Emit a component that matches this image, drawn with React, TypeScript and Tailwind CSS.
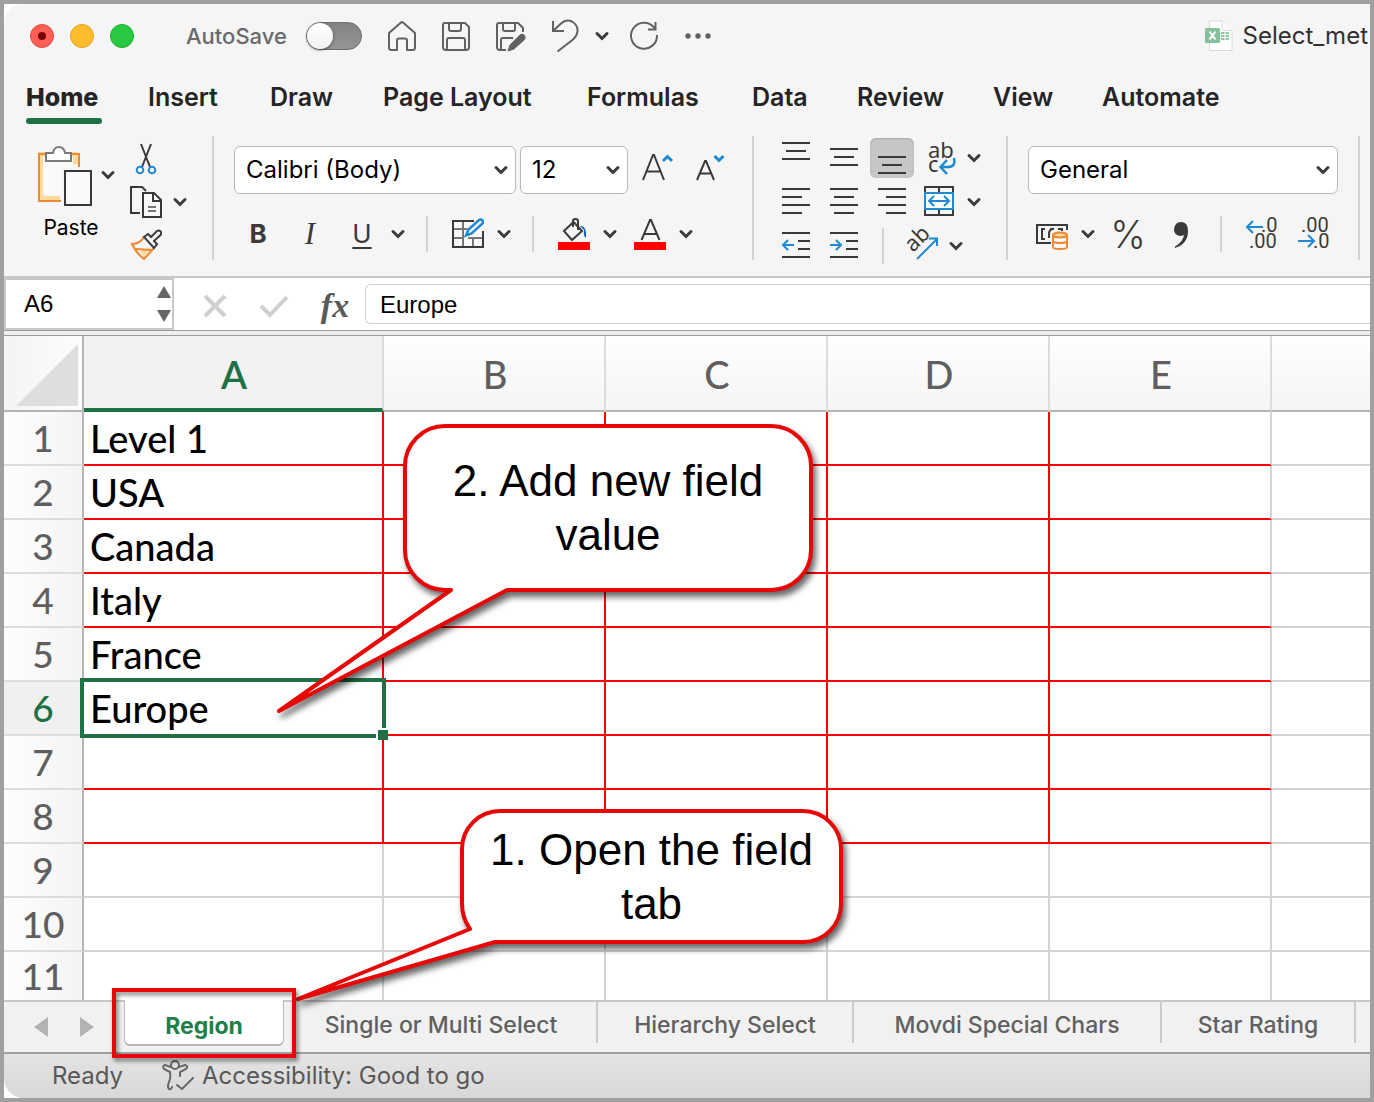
import React from 'react';

const ribbonTabs = [
  { label: 'Home', width: 'w-[76px]' },
  { label: 'Insert', width: 'w-[74px]' },
  { label: 'Draw', width: 'w-[65px]' },
  { label: 'Page Layout', width: 'w-[156px]' },
  { label: 'Formulas', width: 'w-[117px]' },
  { label: 'Data', width: 'w-[57px]' },
  { label: 'Review', width: 'w-[88px]' },
  { label: 'View', width: 'w-[61px]' },
  { label: 'Automate', width: 'w-[122px]' },
];

const columns = ['A', 'B', 'C', 'D', 'E', ''];
const values = ['Level 1', 'USA', 'Canada', 'Italy', 'France', 'Europe', '', '', '', '', ''];
const sheets = [
  { name: 'Single or Multi Select', width: 'w-[312px]' },
  { name: 'Hierarchy Select', width: 'w-[256px]' },
  { name: 'Movdi Special Chars', width: 'w-[308px]' },
  { name: 'Star Rating', width: 'w-[194px]' },
];

const SELECTED_ROW = 6;
const BORDERED_ROWS = 8;

const Chevron: React.FC = () => (
  <svg className="h-6 w-6" viewBox="0 0 24 24" fill="none" stroke="#3b3a39" strokeWidth={3}>
    <path d="M7 9.5l5 5 5-5" strokeLinecap="round" strokeLinejoin="miter" />
  </svg>
);

const MenuButton: React.FC<{ label: string }> = ({ label }) => (
  <button aria-label={label} className="flex h-8 w-6 shrink-0 items-center justify-center">
    <Chevron />
  </button>
);

interface IconButtonProps {
  label: string;
  className?: string;
  children: React.ReactNode;
}

const IconButton: React.FC<IconButtonProps> = ({ label, className = 'w-8 h-8', children }) => (
  <button aria-label={label} className={`flex shrink-0 items-center justify-center ${className}`}>
    {children}
  </button>
);

// Horizontal strokes of the alignment icons, given as [x1, x2, y]
const Lines: React.FC<{ lines: number[][]; children?: React.ReactNode }> = ({ lines, children }) => (
  <svg className="h-8 w-8" viewBox="0 0 32 32" fill="none" strokeWidth={2}>
    {lines.map(([x1, x2, y]) => (
      <path key={y} d={`M${x1} ${y}H${x2}`} stroke="#3b3a39" />
    ))}
    {children}
  </svg>
);

const Divider: React.FC = () => <div className="h-31 w-0.5 shrink-0 bg-[#d2d2d2]" />;
const SmallDivider: React.FC = () => <div className="h-9 w-0.5 shrink-0 bg-[#d2d2d2]" />;

const Picker: React.FC<{ label: string; value: string; width: string }> = ({ label, value, width }) => (
  <div className={`relative shrink-0 ${width}`}>
    <select
      aria-label={label}
      defaultValue={value}
      className="h-12 w-full appearance-none rounded-md border border-[#b8b8b8] bg-white pl-[11px] text-[24px] text-black"
    >
      <option>{value}</option>
    </select>
    <span className="pointer-events-none absolute top-3 right-[3px]">
      <Chevron />
    </span>
  </div>
);

const TitleBar: React.FC = () => (
  <header className="flex h-16 items-center overflow-hidden pl-[26px]">
    <div className="flex shrink-0 gap-4">
      <button aria-label="Close" className="flex h-6 w-6 items-center justify-center rounded-full border border-[#e24b41] bg-[#ff5f57]">
        <span className="h-2 w-2 rounded-full bg-[#7a0000]" />
      </button>
      <button aria-label="Minimize" className="h-6 w-6 rounded-full border border-[#e1a325] bg-[#febc2e]" />
      <button aria-label="Zoom" className="h-6 w-6 rounded-full border border-[#1dad2b] bg-[#28c840]" />
    </div>
    <label className="ml-[52px] flex shrink-0 items-center text-[22px] font-medium text-[#6a6a6a]">
      <span className="w-[120px]">AutoSave</span>
      <input type="checkbox" className="peer sr-only" />
      <span className="flex h-7 w-14 items-center rounded-full border border-[#6f6f6f] bg-linear-to-b from-[#828282] to-[#959595]">
        <span className="h-[26px] w-[26px] rounded-full bg-linear-to-b from-white to-[#f2f2f2] shadow-[0_1px_3px_rgba(0,0,0,0.5)]" />
      </span>
    </label>
    <div className="ml-6 flex shrink-0 items-center text-[#616161]">
      <IconButton label="Home" className="mr-[22px] h-8 w-8">
        <svg className="h-8 w-8" viewBox="0 0 32 32" fill="none" stroke="currentColor" strokeWidth={2} strokeLinejoin="round">
          <path d="M3 13L15 2.500Q16 1.700 17 2.500L29 13V27.500Q29 30 26.500 30H21V20.500Q21 18.500 19 18.500H13Q11 18.500 11 20.500V30H5.500Q3 30 3 27.500Z" />
        </svg>
      </IconButton>
      <IconButton label="Save" className="mr-[22px] h-8 w-8">
        <svg className="h-8 w-8" viewBox="0 0 32 32" fill="none" stroke="currentColor" strokeWidth={2} strokeLinejoin="round">
          <path d="M5 3H25L29 7V27Q29 30 26 30H6Q3 30 3 27V5Q3 3 5 3Z" />
          <path d="M9 3V9Q9 11 11 11H19Q21 11 21 9V3M7 30V20Q7 18 9 18H23Q25 18 25 20V30" />
        </svg>
      </IconButton>
      <IconButton label="Save As" className="mr-6 h-8 w-8">
        <svg className="h-8 w-8" viewBox="0 0 32 32" fill="none" stroke="currentColor" strokeWidth={2} strokeLinejoin="round">
          <path d="M12 30H6Q3 30 3 27V5Q3 3 5 3H24L29 8V12M9 3V9Q9 11 11 11H19Q21 11 21 9V3M7 30V20Q7 18 9 18H19" />
          <path d="M14 31L16 25L26 15Q28.500 13 30.500 15.500Q32 18 30 20L20 29Z" fill="currentColor" strokeWidth={1} />
        </svg>
      </IconButton>
      <IconButton label="Undo" className="mr-2 h-9 w-8">
        <svg className="h-9 w-8" viewBox="0 0 32 36" fill="none" stroke="currentColor" strokeWidth={2}>
          <path d="M3 3V13H14M3 13L11 5.500Q16 1 22 3.500Q28 7 27.500 13.500Q27 18 23 21.500L7.500 33.500" />
        </svg>
      </IconButton>
      <MenuButton label="Undo options" />
      <IconButton label="Redo" className="ml-3.5 h-8 w-8">
        <svg className="h-8 w-8" viewBox="0 0 32 32" fill="none" stroke="currentColor" strokeWidth={2}>
          <path d="M26.500 8A13 13 0 1 0 29 15M27.500 2V9.500H20" />
        </svg>
      </IconButton>
      <IconButton label="More" className="ml-6 h-8 w-8">
        <svg className="h-8 w-8" viewBox="0 0 32 32" fill="currentColor">
          <circle cx="4" cy="16" r="2.700" />
          <circle cx="14" cy="16" r="2.700" />
          <circle cx="24" cy="16" r="2.700" />
        </svg>
      </IconButton>
    </div>
    <h1 className="ml-auto flex shrink-0 items-center pr-0.5 text-[24px] text-[#303030]">
      <svg className="mr-2.5 h-8 w-7" viewBox="0 0 28 32">
        <path d="M4.500 1H17L27 11V30.500H4.500Z" fill="#fff" stroke="#d9d9d9" />
        <path d="M17 1V9Q17 10.500 19 10.500H27" fill="#fafafa" stroke="#d9d9d9" />
        <path d="M16 12H24V20H16Z" fill="#8cc8a2" />
        <path d="M16 14.500H24M16 17.500H24M20 12V20" stroke="#fff" />
        <rect y="8" width="15" height="15" rx="1" fill="#86bf9c" />
        <path d="M4.500 11.500L10.500 19.500M10.500 11.500L4.500 19.500" stroke="#fff" strokeWidth={2} />
      </svg>
      Select_met
    </h1>
  </header>
);

const RibbonTabs: React.FC = () => (
  <nav className="flex h-14 overflow-hidden pl-[22px] text-[25px] text-[#242424]">
    {ribbonTabs.map(({ label, width }, i) => (
      <button
        key={label}
        className={`flex h-14 shrink-0 flex-col justify-between pt-3 text-left whitespace-nowrap ${width} ${i === 0 ? 'mr-[46px] font-extrabold' : 'mr-12 font-semibold'}`}
      >
        <span className="leading-[34px]">{label}</span>
        {i === 0 && <span className="h-1.5 w-full rounded-full bg-[#1e7145]" />}
      </button>
    ))}
  </nav>
);

const ClipboardGroup: React.FC = () => (
  <div className="flex w-[182px] shrink-0 pt-1">
    <div className="w-[100px] pt-1 pl-1.5">
      <div className="flex items-center">
        <IconButton label="Paste" className="h-[62px] w-14">
          <svg className="h-[62px] w-14" viewBox="0 0 56 62" fill="none" strokeWidth={2}>
            <path d="M2 8H42V20H36V14H8V52H24V58H2Z" fill="#f9db9b" />
            <path d="M7 13H37V51H7Z" fill="#fafafa" />
            <path d="M25 57H3V10H43V24" stroke="#ef8733" />
            <path d="M10 9H17Q18 3 23 3Q28 3 29 9H35V17H10Z" fill="#fff" stroke="#7a7a7a" />
            <path d="M26 23H57V64H26Z" fill="#f5f5f5" />
            <path d="M29 27H55V61H29Z" fill="#fafafa" stroke="#3b3a39" />
          </svg>
        </IconButton>
        <div className="ml-1">
          <MenuButton label="Paste options" />
        </div>
      </div>
      <div className="w-[70px] pt-1.5 text-center text-[21px] leading-8 text-black">Paste</div>
    </div>
    <div>
      <IconButton label="Cut" className="h-9 w-8">
        <svg className="h-9 w-8" viewBox="0 0 32 36" fill="none" strokeWidth={2}>
          <path d="M11 4L20 27M21 4L12 27" stroke="#3b3a39" />
          <circle cx="10" cy="30" r="3.300" stroke="#1f8ad2" />
          <circle cx="22" cy="30" r="3.300" stroke="#1f8ad2" />
        </svg>
      </IconButton>
      <div className="mt-2 flex items-center gap-1.5">
        <IconButton label="Copy" className="h-9 w-8">
          <svg className="h-9 w-8" viewBox="0 0 32 36" fill="none" stroke="#3b3a39" strokeWidth={2}>
            <path d="M10 29H1V3H12L16 7" />
            <path d="M13 9H24L31 16V33H13Z" fill="#fafafa" />
            <path d="M23 9V17H31" />
            <path d="M18 23H26M18 27H26" stroke="#777" />
          </svg>
        </IconButton>
        <MenuButton label="Copy options" />
      </div>
      <IconButton label="Format Painter" className="mt-2 h-8 w-8">
        <svg className="h-8 w-8" viewBox="0 0 32 32" fill="none" strokeWidth={2}>
          <path d="M10 23L22 19L14 29Z" fill="#f9db9b" />
          <path d="M14 9Q10 16 2 16Q6 25 14 31L24 20M6 21L21 22" stroke="#ef8733" />
          <path d="M14 9L18 6L21 9L27 3Q29 2 30.500 3.500Q32 5 30.500 7L24 13L27 16L24 20Z" fill="#fafafa" stroke="#3b3a39" />
        </svg>
      </IconButton>
    </div>
  </div>
);

const FontGroup: React.FC = () => (
  <div className="w-[500px] shrink-0 pt-2.5 text-[#3b3a39]">
    <div className="flex gap-1">
      <Picker label="Font" value="Calibri (Body)" width="w-[282px]" />
      <Picker label="Font size" value="12" width="w-[108px]" />
      <IconButton label="Increase font size" className="ml-1.5 h-11 w-10">
        <svg className="h-9 w-9" viewBox="0 0 36 36" fill="none" stroke="#3b3a39" strokeWidth={2}>
          <path d="M3 30L13 5H14L24 30M6.500 21.500H20.500" />
          <path d="M23 11L27.500 6.500L32 11" stroke="#1f8ad2" strokeWidth={3} />
        </svg>
      </IconButton>
      <IconButton label="Decrease font size" className="ml-2 h-11 w-10">
        <svg className="h-9 w-9" viewBox="0 0 36 36" fill="none" stroke="#3b3a39" strokeWidth={2}>
          <path d="M5 30L13 11H14L22 30M7.500 23.500H19.500" />
          <path d="M22.500 6L27 10.500L31.500 6" stroke="#1f8ad2" strokeWidth={3} />
        </svg>
      </IconButton>
    </div>
    <div className="mt-[22px] flex items-center text-[26px] leading-9">
      <button className="w-12 font-bold">B</button>
      <button className="w-14 font-['Liberation_Serif',serif] text-[31px] italic">I</button>
      <button className="w-12 underline decoration-2 underline-offset-4">U</button>
      <MenuButton label="Underline options" />
      <div className="mr-6 ml-4">
        <SmallDivider />
      </div>
      <IconButton label="Borders">
        <svg className="h-8 w-8" viewBox="0 0 32 32" fill="none" strokeWidth={2}>
          <path d="M1 2H31V30H1Z" fill="#fafafa" />
          <path d="M11 3V29M1 11H16M1 20H12M21 20V29M16 20H31" stroke="#777" />
          <path d="M22 3H1V29H31V13" stroke="#3b3a39" />
          <path d="M12 19L15 11L27 0H33V6L21 17Z" fill="#f5f5f5" />
          <path d="M14 17.500L16.500 11.500L27 2Q29 1 30.500 2.500Q31.500 4 30 6L19.500 15.500Z" fill="#fafafa" stroke="#1f8ad2" strokeWidth={2.500} />
        </svg>
      </IconButton>
      <div className="ml-2">
        <MenuButton label="Border options" />
      </div>
      <div className="mr-6 ml-4">
        <SmallDivider />
      </div>
      <IconButton label="Fill color">
        <svg className="h-8 w-8" viewBox="0 0 32 32" fill="none" strokeWidth={2}>
          <path d="M6 13L15.500 4L24 13L14 22Z" fill="#fafafa" stroke="#3b3a39" />
          <path d="M15 9V3Q15 1 17.500 1Q20 1 20 3V12" stroke="#3b3a39" />
          <path d="M22 8Q29 7 28 20Q25 18 26 12Z" fill="#0f62b0" />
          <path d="M0 24H32V32H0Z" fill="#f00" />
        </svg>
      </IconButton>
      <div className="mr-3 ml-2">
        <MenuButton label="Fill color options" />
      </div>
      <IconButton label="Font color">
        <svg className="h-8 w-8" viewBox="0 0 32 32" fill="none" stroke="#3b3a39" strokeWidth={2}>
          <path d="M7.500 22L16 2H17L25.500 22M10.500 16H22.500" />
          <path d="M0 24H32V32H0Z" fill="#f00" stroke="none" />
        </svg>
      </IconButton>
      <div className="ml-2">
        <MenuButton label="Font color options" />
      </div>
    </div>
  </div>
);

const AlignmentGroup: React.FC = () => (
  <div className="w-[234px] shrink-0 pt-0.5">
    <div className="flex h-10 items-center">
      <IconButton label="Top align" className="h-10 w-12">
        <Lines lines={[[2, 30, 1], [6, 26, 9], [2, 30, 17]]} />
      </IconButton>
      <IconButton label="Middle align" className="h-10 w-12">
        <Lines lines={[[2, 30, 7], [6, 26, 15], [2, 30, 23]]} />
      </IconButton>
      <IconButton label="Bottom align" className="mx-0.5 h-10 w-11 rounded-md bg-[#c6c6c6] shadow-[inset_0_1px_2px_rgba(0,0,0,0.15)]">
        <Lines lines={[[2, 30, 15], [6, 26, 23], [2, 30, 31]]} />
      </IconButton>
      <IconButton label="Wrap text" className="mr-1 ml-1.5 h-8 w-9">
        <svg className="h-9 w-9 overflow-visible" viewBox="0 0 36 36" fill="none" strokeWidth={2.500}>
          <text x="6" y="18" fontSize="22" fill="#3b3a39" className="font-['Noto_Sans']">ab</text>
          <text x="6" y="32" fontSize="22" fill="#3b3a39" className="font-['Noto_Sans']">c</text>
          <path d="M32 18Q34 27 26 27H19M25 20L18.500 27L25 34" stroke="#1f8ad2" />
        </svg>
      </IconButton>
      <MenuButton label="Wrap options" />
    </div>
    <div className="mt-0.5 flex h-11 items-center">
      <IconButton label="Align left" className="h-10 w-12">
        <Lines lines={[[2, 30, 3], [2, 22, 11], [2, 30, 19], [2, 22, 27]]} />
      </IconButton>
      <IconButton label="Center" className="h-10 w-12">
        <Lines lines={[[2, 30, 3], [6, 26, 11], [2, 30, 19], [6, 26, 27]]} />
      </IconButton>
      <IconButton label="Align right" className="h-10 w-12">
        <Lines lines={[[2, 30, 3], [10, 30, 11], [2, 30, 19], [10, 30, 27]]} />
      </IconButton>
      <IconButton label="Merge" className="mr-1 ml-1.5 h-8 w-9">
        <svg className="h-8 w-8" viewBox="0 0 32 32" fill="none" strokeWidth={2}>
          <path d="M1 1H29V29H1ZM15 1V7M15 23V29" stroke="#3b3a39" />
          <path d="M1 7H29V23H1Z" fill="#fafafa" stroke="#1f8ad2" />
          <path d="M5 15H25M10 10L5 15L10 20M20 10L25 15L20 20" stroke="#1f8ad2" />
        </svg>
      </IconButton>
      <MenuButton label="Merge options" />
    </div>
    <div className="flex h-11 items-center">
      <IconButton label="Decrease indent" className="h-10 w-12">
        <Lines lines={[[2, 30, 3], [18, 30, 11], [18, 30, 19], [2, 30, 27]]}>
          <path d="M14 15H3M8 10L3 15L8 20" stroke="#1f8ad2" />
        </Lines>
      </IconButton>
      <IconButton label="Increase indent" className="h-10 w-12">
        <Lines lines={[[2, 30, 3], [18, 30, 11], [18, 30, 19], [2, 30, 27]]}>
          <path d="M2 15H13M8 10L13 15L8 20" stroke="#1f8ad2" />
        </Lines>
      </IconButton>
      <div className="ml-3.5">
        <SmallDivider />
      </div>
      <IconButton label="Orientation" className="ml-5 h-9 w-9">
        <svg className="h-9 w-9 overflow-visible" viewBox="0 0 36 36" fill="none" strokeWidth={2}>
          <text transform="translate(9 25) rotate(-45)" fontSize="22" fill="#3b3a39" className="font-['Noto_Sans']">ab</text>
          <path d="M13 31L33 11M25 10.500H33V18" stroke="#1f8ad2" />
        </svg>
      </IconButton>
      <div className="ml-1">
        <MenuButton label="Orientation options" />
      </div>
    </div>
  </div>
);

const NumberGroup: React.FC = () => (
  <div className="w-[330px] shrink-0 pt-2.5 text-[#3b3a39]">
    <Picker label="Number format" value="General" width="w-[310px]" />
    <div className="mt-[22px] flex items-center pl-2">
      <IconButton label="Currency">
        <svg className="h-8 w-8" viewBox="0 0 32 32" fill="none" strokeWidth={2}>
          <path d="M15 25H1V7H31V12" stroke="#3b3a39" />
          <path d="M9 11H6V21H9M18 11Q13 10 13 17V20M22 11H26V13" stroke="#3b3a39" />
          <path d="M17 17V29Q17 31 24 31Q31 31 31 29V17" fill="#fafafa" stroke="#ef8733" />
          <ellipse cx="24" cy="17" rx="7" ry="2.500" fill="#f9db9b" stroke="#ef8733" />
          <path d="M17 23Q18 25 24 25Q30 25 31 23" stroke="#ef8733" />
        </svg>
      </IconButton>
      <div className="ml-2">
        <MenuButton label="Currency options" />
      </div>
      <button aria-label="Percent style" className="ml-2 flex h-9 w-10 items-center justify-center text-[38px] leading-9 font-light">%</button>
      <IconButton label="Comma style" className="ml-5 h-8 w-7">
        <svg className="h-8 w-7" viewBox="0 0 28 32" fill="#3b3a39">
          <path d="M13 4Q20 4 20 13Q20 26 7 30V28.500Q15 24 16 17Q14 18 12 18Q6 17 6 11Q7 4 13 4Z" />
        </svg>
      </IconButton>
      <div className="mr-5 ml-6">
        <SmallDivider />
      </div>
      <IconButton label="Increase decimal" className="h-9 w-9">
        <svg className="h-9 w-9 overflow-visible" viewBox="0 0 36 36" fill="none" strokeWidth={2}>
          <text x="19" y="16" fontSize="20" fill="#3b3a39" className="font-['Roboto']">.0</text>
          <text x="7" y="32" fontSize="20" fill="#3b3a39" className="font-['Roboto']">.00</text>
          <path d="M21 11H5M11 5L5 11L11 17" stroke="#1f8ad2" />
        </svg>
      </IconButton>
      <IconButton label="Decrease decimal" className="ml-4 h-9 w-9">
        <svg className="h-9 w-9 overflow-visible" viewBox="0 0 36 36" fill="none" strokeWidth={2}>
          <text x="7" y="16" fontSize="20" fill="#3b3a39" className="font-['Roboto']">.00</text>
          <text x="19" y="32" fontSize="20" fill="#3b3a39" className="font-['Roboto']">.0</text>
          <path d="M4 25H20M14 19L20 25L14 31" stroke="#1f8ad2" />
        </svg>
      </IconButton>
    </div>
  </div>
);

const FormulaBar: React.FC = () => (
  <div className="flex h-[54px] items-center overflow-hidden border-t-2 border-[#c8c8c8] bg-white font-['Liberation_Sans',sans-serif] text-[24px] text-black">
    <div className="flex h-full w-[170px] shrink-0 items-center border-2 border-[#c8c8c8]">
      <input aria-label="Name box" defaultValue="A6" className="min-w-0 flex-1 bg-transparent pl-[18px]" />
      <div className="flex w-[15px] shrink-0 flex-col gap-3">
        <button aria-label="Previous name">
          <svg className="h-3 w-3.5" viewBox="0 0 14 12" fill="#666">
            <path d="M7 0L14 12H0Z" />
          </svg>
        </button>
        <button aria-label="Next name">
          <svg className="h-3 w-3.5" viewBox="0 0 14 12" fill="#666">
            <path d="M7 12L14 0H0Z" />
          </svg>
        </button>
      </div>
    </div>
    <IconButton label="Cancel" className="ml-[25px] h-8 w-8">
      <svg className="h-8 w-8" viewBox="0 0 32 32" stroke="#cfcfcf" strokeWidth={4}>
        <path d="M6 8L26 28M26 8L6 28" />
      </svg>
    </IconButton>
    <IconButton label="Enter" className="ml-[26px] h-8 w-8">
      <svg className="h-8 w-8" viewBox="0 0 32 32" fill="none" stroke="#cfcfcf" strokeWidth={4}>
        <path d="M4 18L13 27L30 9" />
      </svg>
    </IconButton>
    <button aria-label="Insert function" className="ml-7 w-9 pt-1 font-['Liberation_Serif',serif] text-[34px] leading-9 font-bold text-[#5a5a5a] italic">
      fx
    </button>
    <input
      aria-label="Formula"
      defaultValue="Europe"
      className="ml-3 h-10 min-w-0 flex-1 rounded-l-md border border-r-0 border-[#d0d0d0] pt-0.5 pl-3.5"
    />
  </div>
);

const cellBorder = (row: number, col: number) => {
  if (row > BORDERED_ROWS || col > 4) return 'border-[#d4d4d4]';
  return col === 4 ? 'border-r-[#d4d4d4] border-b-[#ff0000]' : 'border-[#ff0000]';
};

const Grid: React.FC = () => (
  <table className="w-full table-fixed border-separate border-spacing-0 font-['Lato',sans-serif] text-[38px] font-medium">
    <colgroup>
      <col className="w-20" />
      <col className="w-[300px]" />
      <col className="w-[222px]" />
      <col className="w-[222px]" />
      <col className="w-[222px]" />
      <col className="w-[222px]" />
      <col />
    </colgroup>
    <thead>
      <tr className="h-19">
        <th className="border-r-2 border-b-2 border-[#b5b5b5] bg-linear-to-r from-[#f4f4f4] to-[#fdfdfd] p-0">
          <button aria-label="Select all" className="flex w-full justify-end pt-1 pr-1">
            <svg className="h-[62px] w-[62px]" viewBox="0 0 62 62" fill="#dedede">
              <path d="M62 0V62H0Z" />
            </svg>
          </button>
        </th>
        {columns.map((name, i) => (
          <th
            key={i}
            scope="col"
            className={`p-0 pl-0.5 ${i === 5 ? '' : 'border-r-2 border-r-[#dcdcdc]'} ${
              i === 0
                ? 'border-b-4 border-b-[#1e7145] bg-[#f2f2f2] pt-1 font-semibold text-[#1e7145]'
                : 'border-b-2 border-b-[#b5b5b5] bg-linear-to-b from-[#fefefe] to-[#f5f5f5] pt-0.5 font-medium text-[#5f5f5f]'
            }`}
          >
            {name}
          </th>
        ))}
      </tr>
    </thead>
    <tbody>
      {values.map((value, r) => {
        const row = r + 1;
        const last = row === values.length;
        const selected = row === SELECTED_ROW;
        return (
          <tr key={row} className={last ? 'h-12' : 'h-[54px]'}>
            <th
              scope="row"
              className={`border-r-2 border-b-[#dcdcdc] border-r-[#b5b5b5] p-0 text-[37px] leading-[48px] font-medium ${last ? '' : 'border-b-2'} ${
                selected ? 'bg-[#f0f0f0] text-[#1e7145]' : 'bg-linear-to-r from-[#fefefe] to-[#f4f4f4] text-[#5f5f5f]'
              }`}
            >
              {row}
            </th>
            {columns.map((_, c) => (
              <td
                key={c}
                className={`relative p-0 pl-1.5 leading-[48px] text-black ${c === 5 ? '' : 'border-r-2'} ${last ? '' : 'border-b-2'} ${cellBorder(row, c)}`}
              >
                {c === 0 && value}
                {c === 0 && selected && (
                  <>
                    <div className="absolute -inset-1 z-10 border-4 border-[#1e7145]" />
                    <div className="absolute -right-1.5 -bottom-1.5 z-10 h-3 w-3 border-t-2 border-l-2 border-white bg-[#1e7145]" />
                  </>
                )}
              </td>
            ))}
          </tr>
        );
      })}
    </tbody>
  </table>
);

interface CalloutProps {
  className: string;
  path: string;
  children: React.ReactNode;
}

const Callout: React.FC<CalloutProps> = ({ className, path, children }) => (
  <div className={`absolute z-10 flex items-center justify-center ${className}`}>
    <svg className="absolute inset-0 h-full w-full overflow-visible drop-shadow-[3px_5px_3px_rgba(0,0,0,0.6)]">
      <path d={path} fill="#fff" stroke="#e80707" strokeWidth={4} strokeLinejoin="round" />
    </svg>
    <p className="relative px-5 text-center font-['Liberation_Sans',sans-serif] text-[44px] leading-[54px] text-black">{children}</p>
  </div>
);

const SheetTabs: React.FC = () => (
  <nav className="flex h-[52px] border-t-2 border-[#c8c8c8] bg-[#f1f1f1] text-[23px]">
    <div className="flex w-30 shrink-0 items-center gap-8 pl-[30px]">
      <button aria-label="Previous sheet">
        <svg className="h-5 w-3.5" viewBox="0 0 14 20" fill="#b3b3b3">
          <path d="M14 0V20L0 10Z" />
        </svg>
      </button>
      <button aria-label="Next sheet">
        <svg className="h-5 w-3.5" viewBox="0 0 14 20" fill="#b3b3b3">
          <path d="M0 0V20L14 10Z" />
        </svg>
      </button>
    </div>
    <div className="relative -mt-0.5 w-40 shrink-0">
      <button className="h-[46px] w-full rounded-b-md border-x border-b-2 border-[#b8b8b8] bg-white pt-2 font-bold text-[#218049]">Region</button>
      <div className="pointer-events-none absolute -inset-x-3 -top-3 z-20 h-[70px] border-4 border-[#e80707] drop-shadow-[2px_3px_2px_rgba(0,0,0,0.5)]" />
    </div>
    <div className="flex min-w-0 overflow-hidden pl-0.5">
      {sheets.map(({ name, width }) => (
        <button key={name} className={`h-[41px] shrink-0 border-r-2 border-[#cccccc] pt-1.5 font-medium whitespace-nowrap text-[#606060] ${width}`}>
          {name}
        </button>
      ))}
    </div>
  </nav>
);

const StatusBar: React.FC = () => (
  <footer className="flex h-[46px] items-center border-t-2 border-[#a0a0a0] bg-linear-to-b from-[#e4e4e4] to-[#d8d8d8] pl-12 text-[24px] text-[#585858]">
    <span className="w-[110px]">Ready</span>
    <svg className="mr-2 h-8 w-8" viewBox="0 0 32 32" fill="none" stroke="#666" strokeWidth={2} strokeLinecap="round">
      <circle cx="13" cy="5" r="4" />
      <path d="M9 7L3 5Q0 6 2 9L8 12Q9 18 7 22Q5 27 7 29Q9 30 10 27M17 7L23 5Q27 6 24 9L18 12V16M15 25L20 29L31 18" />
    </svg>
    Accessibility: Good to go
  </footer>
);

const App: React.FC = () => {
  return (
    <div className="border-4 border-[#a0a0a0] bg-white font-['Inter',sans-serif]">
      <div className="overflow-hidden rounded-l-[20px] bg-[#f5f5f5]">
        <TitleBar />
        <RibbonTabs />
        <div className="flex h-[152px] overflow-hidden pt-3 pl-[26px]">
          <ClipboardGroup />
          <Divider />
          <div className="w-5 shrink-0" />
          <FontGroup />
          <div className="w-[18px] shrink-0" />
          <Divider />
          <div className="w-[18px] shrink-0" />
          <AlignmentGroup />
          <Divider />
          <div className="w-5 shrink-0" />
          <NumberGroup />
          <Divider />
        </div>
        <FormulaBar />
        <div className="h-1.5 border-y border-[#9c9c9c] bg-[#efefef]" />
        <main className="relative bg-white">
          <Grid />
          <Callout
            className="top-[88px] left-[399px] h-[168px] w-[410px]"
            path="M42 2H368A40 40 0 0 1 408 42V126A40 40 0 0 1 368 166H104L-124 287L48 166H42A40 40 0 0 1 2 126V42A40 40 0 0 1 42 2Z"
          >
            2. Add new field value
          </Callout>
          <Callout
            className="top-[473px] left-[456px] h-[135px] w-[383px]"
            path="M40 2H343A38 38 0 0 1 381 40V95A38 38 0 0 1 343 133H35L-162 190L10 120Q2 109 2 94V40A38 38 0 0 1 40 2Z"
          >
            1. Open the field tab
          </Callout>
        </main>
        <SheetTabs />
        <StatusBar />
      </div>
    </div>
  );
};

export default App;
